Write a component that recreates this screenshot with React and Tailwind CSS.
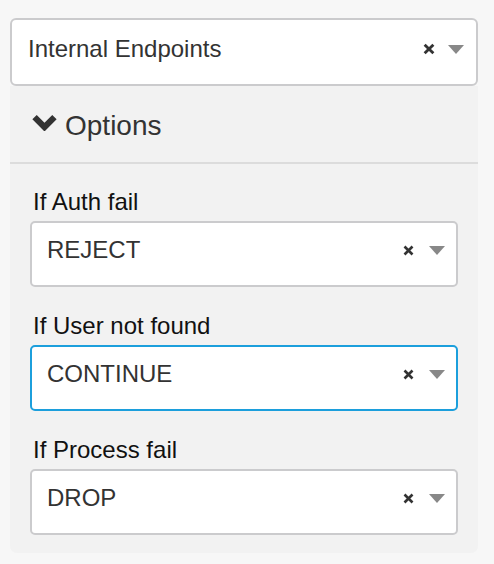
import React from 'react';

const ClearIcon = ({ size = 11 }) => (
  <svg width={size} height={size} viewBox="0 0 11 11" className="block">
    <path d="M1.5 1.5 L9.5 9.5 M9.5 1.5 L1.5 9.5" stroke="#333" strokeWidth="2.6" strokeLinecap="butt" />
  </svg>
);

const Caret = () => (
  <svg width="16" height="9" viewBox="0 0 16 9" className="block">
    <path d="M0 0 H16 L8 9 Z" fill="#888" />
  </svg>
);

const Select = ({ value, focused = false }) => (
  <div
    className={`h-[66px] bg-white rounded-[5px] border-2 flex items-start justify-between pl-[15px] pr-[11px] pt-[14px] ${
      focused ? 'border-[#1c9fdc]' : 'border-[#cbcbcd]'
    }`}
  >
    <span className="text-[24px] leading-[26px] text-[#333]">{value}</span>
    <div className="flex items-center gap-[15px] h-[26px]">
      <ClearIcon />
      <Caret />
    </div>
  </div>
);

const Field = ({ label, value, focused }) => (
  <div className="flex flex-col">
    <label className="text-[24px] leading-[26px] text-[#111] pl-[3px] mb-[6px]">{label}</label>
    <Select value={value} focused={focused} />
  </div>
);

export default function App() {
  return (
    <div
      className="w-[494px] h-[564px] bg-[#f7f7f7] pt-[18px] pl-[10px] pr-[16px]"
      style={{ fontFamily: '"Liberation Sans", Arial, sans-serif' }}
    >
      <div className="h-[68px] bg-white rounded-[6px] border-2 border-[#cbcbcd] flex items-start justify-between pl-[16px] pr-[12px] pt-[16px]">
        <span className="text-[24px] leading-[26px] text-[#333]">Internal Endpoints</span>
        <div className="flex items-center gap-[13px] h-[26px]">
          <ClearIcon size={12} />
          <Caret />
        </div>
      </div>

      <div className="bg-[#f2f2f2] rounded-b-[7px]">
        <div className="h-[78px] flex items-center pl-[22px] pt-[4px] border-b-2 border-[#dcdcdc]">
          <svg width="25" height="16" viewBox="0 0 25 16.5" className="block mr-[8px] -mt-[6px]">
            <path d="M0 4.5 L4.5 0 L12.5 8 L20.5 0 L25 4.5 L12.5 17 Z" fill="#333" />
          </svg>
          <span className="text-[28px] leading-[30px] text-[#333]">Options</span>
        </div>
        <div className="flex flex-col gap-[26px] pt-[25px] pb-[18px] pl-[20px] pr-[20px]">
          <Field label="If Auth fail" value="REJECT" />
          <Field label="If User not found" value="CONTINUE" focused />
          <Field label="If Process fail" value="DROP" />
        </div>
      </div>
    </div>
  );
}
